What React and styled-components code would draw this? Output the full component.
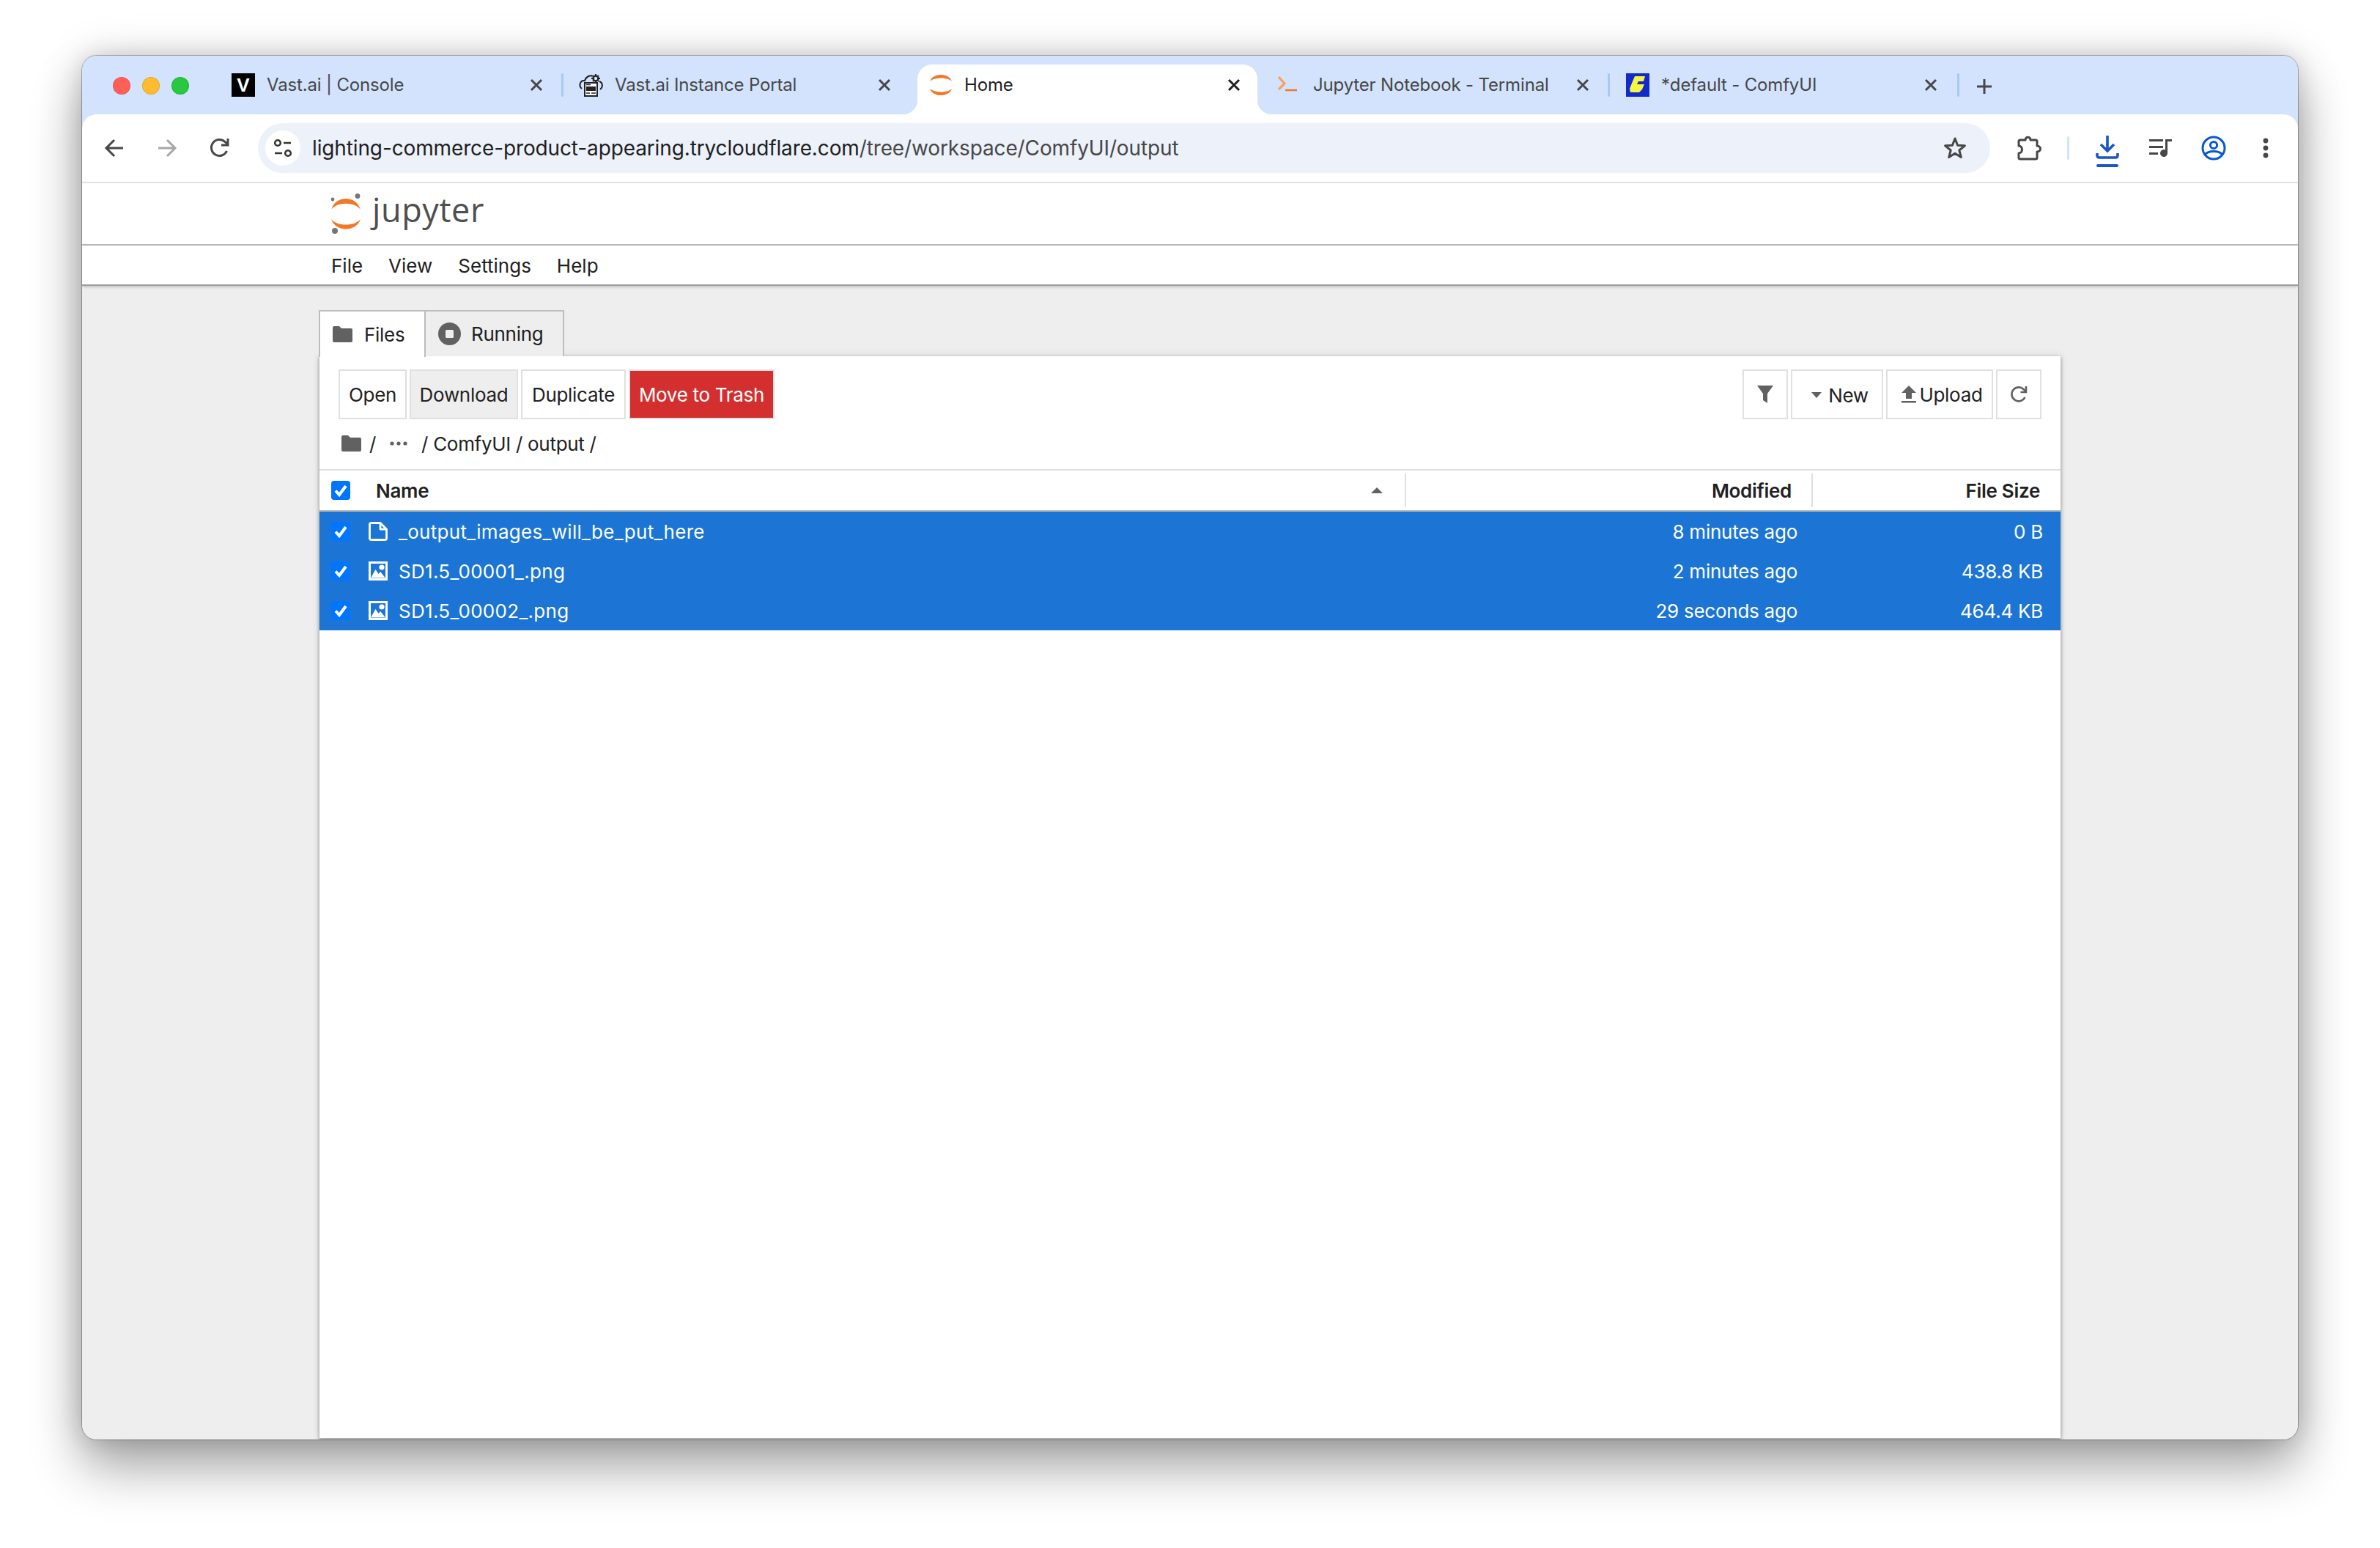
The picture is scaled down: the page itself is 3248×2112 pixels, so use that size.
import React from 'react';
import styled, { createGlobalStyle } from 'styled-components';

const Global = createGlobalStyle`
  html, body { margin: 0; padding: 0; background: #fff; overflow: hidden; }
  body { font-family: Inter, "Liberation Sans", sans-serif; }
  * { box-sizing: border-box; }
`;

const Page = styled.div`
  width: 3248px; height: 2112px; padding: 76px 112px 148px;
`;
const Win = styled.div`
  width: 3024px; height: 1888px; border-radius: 20px; overflow: hidden;
  display: flex; flex-direction: column; background: #d3e3fd;
  box-shadow: 0 0 0 1px rgba(0,0,0,.28), 0 0 30px rgba(0,0,0,.12), 0 0 64px rgba(0,0,0,.12), 0 40px 70px rgba(0,0,0,.32);
`;
const Strip = styled.div`
  height: 80px; flex: none; display: flex; align-items: flex-end; background: #d3e3fd;
`;
const Lights = styled.div`
  width: 188px; height: 68px; flex: none; padding: 0 0 10px 42px; display: flex; gap: 16px; align-items: center;
`;
const Light = styled.span`
  width: 24px; height: 24px; border-radius: 50%; background: ${p => p.$c};
  box-shadow: inset 0 0 0 1px rgba(0,0,0,.1);
`;
const Tab = styled.div`
  position: relative; width: ${p => p.$w}px; height: 68px; flex: none; padding: 12px 0 0 16px;
  display: flex; align-items: flex-start;
  color: ${p => p.$active ? '#1f1f1f' : '#454746'};
  ${p => p.$active ? `
    background: #fff; border-radius: 20px 20px 0 0; margin-right: 12px;
    &::before, &::after { content: ''; position: absolute; bottom: 0; width: 20px; height: 20px; }
    &::before { left: -20px; background: radial-gradient(circle at 0 0, transparent 20px, #fff 20.5px); }
    &::after { right: -20px; background: radial-gradient(circle at 100% 0, transparent 20px, #fff 20.5px); }
  ` : ''}
  ${p => p.$sep ? `
    &::after { content: ''; position: absolute; right: ${p.$sep}px; top: 12px; width: 3px; height: 32px; border-radius: 2px; background: #a8c7fa; }
  ` : ''}
`;
const Fav = styled.span`
  width: 32px; height: 32px; flex: none; display: flex; align-items: center; justify-content: center;
`;
const VFav = styled(Fav)`
  background: #000; color: #fff; font: 700 26px "Liberation Sans", sans-serif;
`;
const ComfyFav = styled(Fav)`
  background: #1329c8;
`;
const TabTitle = styled.span`
  margin-left: 16px; font-size: 24px; line-height: 32px; white-space: nowrap; letter-spacing: -0.16px;
`;
const TabClose = styled.span`
  position: absolute; left: 422px; top: 18px; width: 20px; height: 20px; display: flex;
`;
const Plus = styled.span`
  display: flex; margin: 0 0 28px 22px; width: 20px; height: 20px;
`;

const Toolbar = styled.div`
  height: 94px; flex: none; background: #fff; border-radius: 20px 20px 0 0; border-bottom: 2px solid #e3e3e3;
  display: flex; align-items: center; padding: 0 0 0 8px;
`;
const NavBtn = styled.span`
  width: 72px; height: 68px; flex: none; display: flex; align-items: center; justify-content: center;
  padding: ${p => p.$pad || '0'};
`;
const Omni = styled.div`
  width: 2364px; height: 68px; flex: none; border-radius: 34px; background: #ecf1fa; margin: 0 16px;
  display: flex; align-items: center; padding: 0 32px 0 10px;
`;
const SiteInfo = styled.span`
  width: 48px; height: 48px; border-radius: 50%; background: #fff; flex: none; display: flex;
`;
const Url = styled.div`
  margin-left: 16px; flex: 1; font-size: 28px; white-space: nowrap; color: #1f1f1f; letter-spacing: -0.13px;
  span { color: #474747; }
`;
const TbSep = styled.span`
  width: 3px; height: 32px; background: #d3e3fd; border-radius: 2px; margin: 0 17px; flex: none;
`;

const Brand = styled.div`
  height: 85px; flex: none; background: #fff; border-bottom: 2px solid #bdbdbd; padding: 14px 0 0 338px;
  display: flex; align-items: flex-start;
`;
const LogoText = styled.span`
  margin: -6px 0 0 14px; font: 400 45px/56px "Open Sans", sans-serif; color: #4f4f4f;
  letter-spacing: 0.6px;
`;
const MenuBar = styled.div`
  height: 55px; flex: none; background: #fff; border-bottom: 2px solid #9e9e9e; padding: 2px 0 0 340px;
  display: flex; align-items: center; font-size: 26px; color: #212121; gap: 35px; letter-spacing: 0;
  box-shadow: 0 1px 4px rgba(0,0,0,.25); position: relative; z-index: 1;
`;
const Main = styled.div`
  flex: 1; min-height: 0; background: #eee; padding: 33px 324px 2px; display: flex; flex-direction: column;
`;
const LabTabs = styled.div`
  height: 63px; flex: none; display: flex; position: relative; z-index: 2; margin: 0 0 0 -1px;
`;
const LabTab = styled.div`
  height: ${p => p.$active ? 64 : 63}px; display: flex; align-items: center; padding-left: ${p => p.$pl}px; gap: ${p => p.$gap}px;
  width: ${p => p.$w}px; font-size: 26px; color: #212121; letter-spacing: -0.3px;
  background: ${p => p.$active ? '#fff' : '#eee'};
  border: 2px solid #bdbdbd; border-bottom: none;
  border-left-width: ${p => p.$active ? 2 : 0}px;
`;
const Card = styled.div`
  flex: 1; min-height: 0; background: #fff; display: flex; flex-direction: column;
  box-shadow: 0 2px 4px 1px rgba(0,0,0,.28), 0 0 12px rgba(0,0,0,.1);
`;
const Actions = styled.div`
  display: flex; justify-content: space-between; padding: 18px 26px 0; flex: none;
`;
const BtnGroup = styled.div`
  display: flex; gap: 4px;
`;
const Btn = styled.div`
  width: ${p => p.$w}px; height: 68px; display: flex; align-items: center; justify-content: center;
  gap: ${p => p.$gap || 0}px; padding: ${p => p.$pad || '0'};
  border: 2px solid #e0e0e0; font-size: 26px; letter-spacing: -0.3px;
  background: ${p => p.$bg || '#fff'}; color: ${p => p.$fg || '#212121'};
`;
const Crumbs = styled.div`
  height: 70px; flex: none; padding: 0 0 2px 30px; display: flex; align-items: center;
  font-size: 26px; color: #212121; letter-spacing: -0.3px; border-bottom: 2px solid #e0e0e0;
`;
const CrumbSlash = styled.span`
  margin-left: 11px;
`;
const CrumbTail = styled.span`
  margin-left: 19px;
`;
const Dots = styled.svg`
  display: block; margin-left: 19px;
`;
const Grid = `display: grid; grid-template-columns: 1483px 555px 1fr;`;
const Head = styled.div`
  ${Grid} height: 56px; flex: none; border-bottom: 2px solid #bdbdbd; font-size: 26px; font-weight: 600; color: #212121; letter-spacing: -0.3px;
`;
const HeadCell = styled.div`
  display: flex; align-items: center; padding: ${p => p.$pad}; position: relative;
  justify-content: ${p => p.$right ? 'flex-end' : 'flex-start'};
  ${p => p.$sep ? `&::after { content: ''; position: absolute; right: 0; top: 4px; bottom: 4px; width: 2px; background: #e0e0e0; }` : ''}
`;
const HeadName = styled.span`
  margin-left: 35px;
`;
const SortCaret = styled.svg`
  display: block; margin-left: auto; margin-right: 20px;
`;
const Row = styled.div`
  ${Grid} height: 54px; flex: none; background: #1c75d4; color: #fff; font-size: 26px; letter-spacing: -0.25px;
`;
const Cell = styled.div`
  display: flex; align-items: center; padding: ${p => p.$pad};
  justify-content: ${p => p.$right ? 'flex-end' : 'flex-start'};
`;
const Check = styled.span`
  width: 26px; height: 26px; border-radius: 4px; background: #0075ff; flex: none; display: flex;
`;
const Name = styled.span`
  margin-left: 15px; letter-spacing: 0.3px;
`;
const RowIcon = styled.svg`
  display: block; flex: none; margin-left: 25px;
`;
const Ico = styled.svg`
  display: block; flex: none;
`;

const Stroke = ({ children, size = 32, color = '#474747', w = 3 }) => (
  <Ico width={size} height={size} viewBox={`0 0 ${size} ${size}`} fill="none" stroke={color} strokeWidth={w}>{children}</Ico>
);

const X = ({ color }) => (
  <Stroke size={20} color={color} w={3}><path d="M3 3 L17 17 M17 3 L3 17" /></Stroke>
);
const JupArcs = ({ size = 32 }) => (
  <Ico width={size} height={size} viewBox="0 0 32 32">
    <path fill="#f37726" d="M1 11 C5 -1 27 -1 31 11 C25 5 7 5 1 11Z" />
    <path fill="#f37726" d="M1 21 C5 33 27 33 31 21 C25 27 7 27 1 21Z" />
  </Ico>
);
const Folder = () => (
  <Ico width="27" height="22" viewBox="0 0 27 22">
    <path fill="#616161" d="M2 0 H9 L12 3 H25 Q27 3 27 5 V20 Q27 22 25 22 H2 Q0 22 0 20 V2 Q0 0 2 0Z" />
  </Ico>
);
const CheckMark = () => (
  <Ico width="26" height="26" viewBox="0 0 26 26">
    <path d="M6 13.5 L11 19 L20 7" fill="none" stroke="#fff" strokeWidth="4" />
  </Ico>
);
const FileIcon = () => (
  <RowIcon width="26" height="26" viewBox="0 0 26 26">
    <path d="M3.5 1.5 H16 L24.5 10 V22.5 Q24.5 24.5 22.5 24.5 H3.5 Q1.5 24.5 1.5 22.5 V3.5 Q1.5 1.5 3.5 1.5Z M16 1.5 V10 H24.5" fill="none" stroke="#fff" strokeWidth="2.8" strokeLinejoin="round" />
  </RowIcon>
);
const ImageIcon = () => (
  <RowIcon width="26" height="26" viewBox="0 0 26 26">
    <rect x="1.5" y="1.5" width="23" height="23" fill="none" stroke="#fff" strokeWidth="3" />
    <circle cx="18" cy="8" r="3.6" fill="#fff" />
    <path d="M3 22.5 L9.5 11 L13.5 17 L16 14 L23 22.5Z" fill="#fff" />
  </RowIcon>
);

const rows = [
  ['file', '_output_images_will_be_put_here', '8 minutes ago', '0 B'],
  ['img', 'SD1.5_00001_.png', '2 minutes ago', '438.8 KB'],
  ['img', 'SD1.5_00002_.png', '29 seconds ago', '464.4 KB'],
];

export default function App() {
  return (
    <Page>
      <Global />
      <Win>
        <Strip>
          <Lights>
            <Light $c="#ff5f57" /><Light $c="#febc2e" /><Light $c="#28c840" />
          </Lights>
          <Tab $w={475} $sep={6}>
            <VFav>V</VFav>
            <TabTitle>Vast.ai | Console</TabTitle>
            <TabClose><X /></TabClose>
          </Tab>
          <Tab $w={477}>
            <Fav>
              <Ico width="36" height="32" viewBox="0 0 36 32" fill="none" stroke="#222" strokeWidth="2">
                <path d="M5 21 C0 17 3 9 9 10 C11 4 17 2 20 4" />
                <path d="M29 11 C34 13 34 19 30 22" />
                <circle cx="24" cy="7" r="3.4" strokeWidth="2.4" />
                <path d="M24 1 V3 M24 11 V13 M18 7 H20 M28 7 H30 M20 3 L21 4 M28 3 L27 4 M20 11 L21 10 M28 11 L27 10" strokeWidth="2" />
                <rect x="9" y="13" width="17" height="18" fill="#fff" stroke="#222" />
                <rect x="11" y="18" width="13" height="6" fill="#222" stroke="none" />
                <path d="M11 15.5 H17 M11 27 H16 M18 27 H24" strokeWidth="1.5" />
              </Ico>
            </Fav>
            <TabTitle>Vast.ai Instance Portal</TabTitle>
            <TabClose><X /></TabClose>
          </Tab>
          <Tab $w={464} $active>
            <Fav><JupArcs /></Fav>
            <TabTitle>Home</TabTitle>
            <TabClose><X color="#1f1f1f" /></TabClose>
          </Tab>
          <Tab $w={475} $sep={6}>
            <Fav>
              <Ico width="32" height="32" viewBox="0 0 32 32" fill="none" stroke="#f9a05e">
                <path d="M1 5 L9 14 L1 22" strokeWidth="3.2" />
                <path d="M10 23 H26" stroke="#f37726" strokeWidth="2.4" />
              </Ico>
            </Fav>
            <TabTitle>Jupyter Notebook - Terminal</TabTitle>
            <TabClose><X /></TabClose>
          </Tab>
          <Tab $w={473} $sep={2}>
            <ComfyFav>
              <Ico width="32" height="32" viewBox="0 0 32 32">
                <path fill="#f5f542" d="M12 4 H26 L24 11 H17 L15 15 H25 L22 22 L18 26 H6 L5 21 L9 11Z" />
              </Ico>
            </ComfyFav>
            <TabTitle>*default - ComfyUI</TabTitle>
            <TabClose><X /></TabClose>
          </Tab>
          <Plus>
            <Stroke size={20} w={3}><path d="M10 0 V20 M0 10 H20" /></Stroke>
          </Plus>
        </Strip>

        <Toolbar>
          <NavBtn>
            <Stroke size={28}><path d="M26 14 H4 M14 3 L3 14 L14 25" /></Stroke>
          </NavBtn>
          <NavBtn>
            <Stroke size={28} color="#a8a8a8"><path d="M2 14 H24 M14 3 L25 14 L14 25" /></Stroke>
          </NavBtn>
          <NavBtn>
            <Ico width="28" height="28" viewBox="0 0 28 28" fill="none" stroke="#474747" strokeWidth="3">
              <path d="M23.5 18 A11 11 0 1 1 21 5.5 L25 9" />
              <path d="M25 1 V10 H16" />
            </Ico>
          </NavBtn>
          <Omni>
            <SiteInfo>
              <Ico width="48" height="48" viewBox="0 0 48 48" fill="none" stroke="#333" strokeWidth="2.6">
                <circle cx="17" cy="17" r="3.8" />
                <path d="M25 17 H35 M13 31 H23" />
                <circle cx="31" cy="31" r="3.8" />
              </Ico>
            </SiteInfo>
            <Url>lighting-commerce-product-appearing.trycloudflare.com<span>/tree/workspace/ComfyUI/output</span></Url>
            <Stroke size={32} w={3}>
              <path d="M16 3 L19.6 12.2 L29.4 12.8 L21.8 19 L24.3 28.6 L16 23.3 L7.7 28.6 L10.2 19 L2.6 12.8 L12.4 12.2Z" strokeLinejoin="round" />
            </Stroke>
          </Omni>
          <NavBtn $pad="0 0 0 4px">
            <Stroke size={34} w={3}>
              <path strokeLinejoin="round" d="M4 6 H11 C11 1 18 1 18 6 H25 Q27 6 27 8 V14 C33 14 33 22 27 22 V30 Q27 32 25 32 H4 Q2 32 2 30 V24 C8 24 8 14 2 14 V8 Q2 6 4 6Z" />
            </Stroke>
          </NavBtn>
          <TbSep />
          <NavBtn $pad="10px 2px 0 0">
            <Ico width="32" height="44" viewBox="0 0 32 44" fill="none" stroke="#1a56c4" strokeWidth="3.6">
              <path d="M16 0 V20 M7 12 L16 21 L25 12" />
              <path d="M2 24 V27 Q2 30 5 30 H27 Q30 30 30 27 V24" />
              <path d="M3 41 H29" strokeWidth="4" strokeLinecap="round" />
            </Ico>
          </NavBtn>
          <NavBtn>
            <Ico width="32" height="26" viewBox="0 0 32 26">
              <path fill="#474747" d="M0 1 H19 V4 H0Z M0 10 H19 V13 H0Z M0 19 H12 V22 H0Z" />
              <path fill="#474747" d="M22 1 H31 V4 H25 V20 A5 5 0 1 1 22 15.5Z" />
            </Ico>
          </NavBtn>
          <NavBtn>
            <Ico width="34" height="34" viewBox="0 0 34 34" fill="none" stroke="#0b57d0" strokeWidth="3">
              <circle cx="17" cy="17" r="15" />
              <circle cx="17" cy="13" r="4.6" />
              <path d="M5 26 C10 20 24 20 29 26" />
            </Ico>
          </NavBtn>
          <NavBtn $pad="0 2px 0 0">
            <Ico width="8" height="28" viewBox="0 0 8 28" fill="#474747">
              <circle cx="4" cy="4" r="3.4" /><circle cx="4" cy="14" r="3.4" /><circle cx="4" cy="24" r="3.4" />
            </Ico>
          </NavBtn>
        </Toolbar>

        <Brand>
          <Ico width="44" height="56" viewBox="0 0 44 56">
            <path fill="#f37726" d="M2 22 C8 2 36 2 42 22 C34 11 10 11 2 22Z" />
            <path fill="#f37726" d="M2 35 C8 53 36 53 42 35 C34 45 10 45 2 35Z" />
            <circle cx="38" cy="3.5" r="3.4" fill="#767677" />
            <circle cx="4" cy="8" r="2.4" fill="#767677" />
            <circle cx="7" cy="51" r="4" fill="#767677" />
          </Ico>
          <LogoText>jupyter</LogoText>
        </Brand>
        <MenuBar>
          <span>File</span><span>View</span><span>Settings</span><span>Help</span>
        </MenuBar>

        <Main>
          <LabTabs>
            <LabTab $active $w={146} $pl={17} $gap={16}><Folder />Files</LabTab>
            <LabTab $w={189} $pl={17} $gap={14}>
              <Ico width="31" height="31" viewBox="0 0 31 31">
                <circle cx="15.5" cy="15.5" r="15.5" fill="#616161" />
                <rect x="10" y="10" width="11" height="11" rx="1.5" fill="#eee" />
              </Ico>
              Running
            </LabTab>
          </LabTabs>
          <Card>
            <Actions>
              <BtnGroup>
                <Btn $w={93}>Open</Btn>
                <Btn $w={148} $bg="#eeeeee">Download</Btn>
                <Btn $w={143}>Duplicate</Btn>
                <Btn $w={199} $bg="#d32f2f" $fg="#fff">Move to Trash</Btn>
              </BtnGroup>
              <BtnGroup>
                <Btn $w={62}>
                  <Ico width="22" height="26" viewBox="0 0 22 26">
                    <path fill="#616161" d="M0 1 H22 L14 12 V25 L8 21 V12Z" />
                  </Ico>
                </Btn>
                <Btn $w={126} $gap={9} $pad="2px 0 0 8px">
                  <Ico width="14" height="8" viewBox="0 0 14 8"><path fill="#616161" d="M0 0 H14 L7 8Z" /></Ico>
                  New
                </Btn>
                <Btn $w={146} $gap={4} $pad="0 0 0 7px">
                  <Ico width="20" height="24" viewBox="0 0 20 24">
                    <path fill="#616161" d="M10 0 L20 10 H14 V18 H6 V10 H0Z M0 21 H20 V23.5 H0Z" />
                  </Ico>
                  Upload
                </Btn>
                <Btn $w={62}>
                  <Ico width="24" height="24" viewBox="0 0 24 24" fill="none" stroke="#616161" strokeWidth="2.6">
                    <path d="M20.5 16 A9.5 9.5 0 1 1 18.5 5 L21.5 8" />
                    <path d="M22 1 V9 H14.5" />
                  </Ico>
                </Btn>
              </BtnGroup>
            </Actions>
            <Crumbs>
              <Folder />
              <CrumbSlash>/</CrumbSlash>
              <Dots width="24" height="6" viewBox="0 0 24 6" fill="#616161">
                <circle cx="3" cy="3" r="2.6" /><circle cx="12" cy="3" r="2.6" /><circle cx="21" cy="3" r="2.6" />
              </Dots>
              <CrumbTail>/ ComfyUI / output /</CrumbTail>
            </Crumbs>
            <Head>
              <HeadCell $sep $pad="0 12px 0 16px">
                <Check><CheckMark /></Check>
                <HeadName>Name</HeadName>
                <SortCaret width="16" height="8" viewBox="0 0 16 8">
                  <path fill="#616161" d="M8 0 L16 8 H0Z" />
                </SortCaret>
              </HeadCell>
              <HeadCell $sep $right $pad="0 29px 0 0">Modified</HeadCell>
              <HeadCell $right $pad="0 28px 0 0">File Size</HeadCell>
            </Head>
            {rows.map(r => (
              <Row key={r[1]}>
                <Cell $pad="0 0 0 16px">
                  <Check><CheckMark /></Check>
                  {r[0] === 'file' ? <FileIcon /> : <ImageIcon />}
                  <Name>{r[1]}</Name>
                </Cell>
                <Cell $right $pad="0 21px 0 0">{r[2]}</Cell>
                <Cell $right $pad="0 24px 0 0">{r[3]}</Cell>
              </Row>
            ))}
          </Card>
        </Main>
      </Win>
    </Page>
  );
}
